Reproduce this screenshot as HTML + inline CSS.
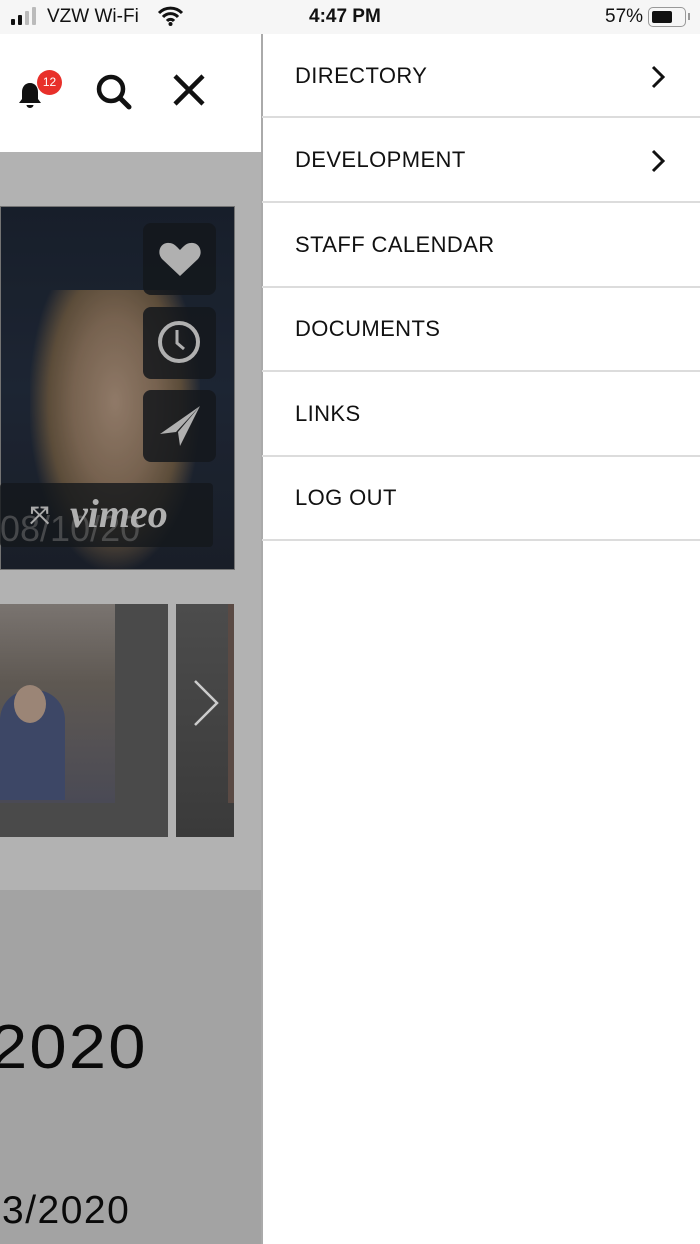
<!DOCTYPE html>
<html><head><meta charset="utf-8"><style>
*{margin:0;padding:0;box-sizing:border-box}
body{width:700px;height:1244px;overflow:hidden;position:relative;font-family:"Liberation Sans",sans-serif;background:#fff}
.a{position:absolute}
.row{position:absolute;left:262px;width:438px;height:85px;border-bottom:2px solid #dcdcdc;font-size:22px;color:#111;padding-left:33px;line-height:84px;letter-spacing:0.4px}
.btn{position:absolute;left:143px;width:73px;height:72px;background:rgba(20,24,28,0.85);border-radius:8px}
</style></head><body>
<div class="a" style="left:0;top:0;width:700px;height:34px;background:#f6f6f6"></div>
<div class="a" style="left:11px;top:19px;width:4px;height:6px;background:#111;border-radius:1px"></div>
<div class="a" style="left:18px;top:15px;width:4px;height:10px;background:#111;border-radius:1px"></div>
<div class="a" style="left:25px;top:11px;width:4px;height:14px;background:#bbb;border-radius:1px"></div>
<div class="a" style="left:32px;top:7px;width:4px;height:18px;background:#bbb;border-radius:1px"></div>
<div class="a" style="left:47px;top:6px;font-size:19px;color:#111">VZW Wi-Fi</div>
<svg class="a" style="left:157px;top:6px" width="27" height="20" viewBox="0 0 27 20"><path d="M2 7a16 16 0 0 1 23 0M6 11a10 10 0 0 1 15 0M10 15a4.5 4.5 0 0 1 7 0" stroke="#111" stroke-width="3" fill="none"/><circle cx="13.5" cy="18" r="2" fill="#111"/></svg>
<div class="a" style="left:309px;top:6px;font-size:19px;font-weight:bold;color:#111">4:47 PM</div>
<div class="a" style="left:605px;top:6px;font-size:19px;color:#111">57%</div>
<div class="a" style="left:648px;top:7px;width:38px;height:20px;border:1.5px solid #999;border-radius:5px"></div>
<div class="a" style="left:652px;top:11px;width:20px;height:12px;background:#111;border-radius:2px"></div>
<div class="a" style="left:688px;top:13px;width:2px;height:7px;background:#999"></div>

<div class="a" style="left:0;top:34px;width:261px;height:118px;background:#fff"></div>
<div class="a" style="left:0;top:152px;width:261px;height:738px;background:#b2b2b2"></div>
<div class="a" style="left:0;top:890px;width:261px;height:354px;background:#a3a3a3"></div>
<div class="a" style="left:261px;top:34px;width:2px;height:1210px;background:#aaa"></div>

<svg class="a" style="left:17px;top:80px" width="26" height="30" viewBox="0 0 26 30"><path d="M13 3c-5 0-8 4-8 9v7l-3 4h22l-3-4v-7c0-5-3-9-8-9z" fill="#111"/><path d="M9.5 25a3.5 3 0 0 0 7 0z" fill="#111"/></svg>
<div class="a" style="left:37px;top:70px;width:25px;height:25px;border-radius:50%;background:#e8302a;color:#fff;font-size:12px;text-align:center;line-height:25px">12</div>
<svg class="a" style="left:94px;top:72px" width="40" height="40" viewBox="0 0 40 40"><circle cx="17" cy="17" r="12" stroke="#111" stroke-width="4.5" fill="none"/><path d="M26 26l9 9" stroke="#111" stroke-width="5" stroke-linecap="round"/></svg>
<svg class="a" style="left:171px;top:72px" width="36" height="36" viewBox="0 0 36 36"><path d="M4 4l28 28M32 4L4 32" stroke="#111" stroke-width="4.5"/></svg>

<div class="a" style="left:0;top:206px;width:235px;height:364px;background:linear-gradient(#1c2432,#222c3c 50%,#1e2430);border:1px solid #888"></div>
<div class="a" style="left:30px;top:290px;width:170px;height:280px;background:radial-gradient(ellipse at 50% 40%,#a98f7a 0,#8c745e 35%,#6c5a44 55%,transparent 72%)"></div>
<div class="a" style="left:0;top:206px;width:235px;height:364px;background:rgba(0,0,0,0.15)"></div>
<div class="btn" style="top:223px"></div>
<div class="btn" style="top:307px"></div>
<div class="btn" style="top:390px"></div>
<svg class="a" style="left:157px;top:240px" width="46" height="40" viewBox="0 0 46 40"><path d="M23 36L5 19C-1 12 4 2 12 3c5 0 8 4 11 7 3-3 6-7 11-7 8-1 13 9 7 16z" fill="#b0b0b0"/></svg>
<svg class="a" style="left:156px;top:319px" width="46" height="46" viewBox="0 0 46 46"><circle cx="23" cy="23" r="19" stroke="#b0b0b0" stroke-width="4" fill="none"/><path d="M21 11v13l7 6" stroke="#b0b0b0" stroke-width="3" fill="none"/></svg>
<svg class="a" style="left:158px;top:404px" width="44" height="44" viewBox="0 0 44 44"><path d="M42 2L2 30l16-2z" fill="#b0b0b0"/><path d="M42 2L20 28l2 14z" fill="#b0b0b0"/></svg>
<div class="a" style="left:0;top:483px;width:213px;height:64px;background:rgba(20,24,28,0.8);border-radius:4px"></div>
<div class="a" style="left:0;top:508px;font-size:36px;color:rgba(120,120,120,0.5)">08/10/20</div>
<div class="a" style="left:30px;top:502px;font-size:24px;color:#aaa;font-weight:bold">⤧</div>
<div class="a" style="left:70px;top:490px;font-size:40px;color:#b0b0b0;font-weight:bold;font-style:italic;font-family:'Liberation Serif',serif">vimeo</div>

<div class="a" style="left:0;top:604px;width:168px;height:233px;background:#4a4a4a"></div>
<div class="a" style="left:0;top:604px;width:115px;height:199px;background:linear-gradient(#7a7470,#5e5852 40%,#4a4a55)"></div>
<div class="a" style="left:0;top:690px;width:65px;height:110px;background:#3d4766;border-radius:30px 30px 0 0"></div>
<div class="a" style="left:14px;top:685px;width:32px;height:38px;background:#9b8576;border-radius:50%"></div>
<div class="a" style="left:176px;top:604px;width:58px;height:233px;background:linear-gradient(#4c4c4c,#3a3a3a)"></div>
<div class="a" style="left:228px;top:604px;width:6px;height:199px;background:#5a4a44"></div>
<svg class="a" style="left:192px;top:678px" width="28" height="50" viewBox="0 0 28 50"><path d="M3 3l22 22L3 47" stroke="#ccc" stroke-width="2.5" fill="none"/></svg>

<div class="a" style="left:-10px;top:1012px;font-size:62px;color:#0a0a0a;letter-spacing:2px;transform:scaleX(1.08);transform-origin:left">2020</div>
<div class="a" style="left:2px;top:1189px;font-size:39px;color:#0a0a0a;letter-spacing:1.5px">3/2020</div>

<div class="row" style="top:34px;height:84px">DIRECTORY<svg class="a" style="left:388px;top:31px" width="16" height="24" viewBox="0 0 16 24"><path d="M3 2l10 10L3 22" stroke="#111" stroke-width="3" fill="none"/></svg></div>
<div class="row" style="top:118px">DEVELOPMENT<svg class="a" style="left:388px;top:31px" width="16" height="24" viewBox="0 0 16 24"><path d="M3 2l10 10L3 22" stroke="#111" stroke-width="3" fill="none"/></svg></div>
<div class="row" style="top:203px">STAFF CALENDAR</div>
<div class="row" style="top:287px">DOCUMENTS</div>
<div class="row" style="top:372px">LINKS</div>
<div class="row" style="top:456px">LOG OUT</div>
</body></html>
